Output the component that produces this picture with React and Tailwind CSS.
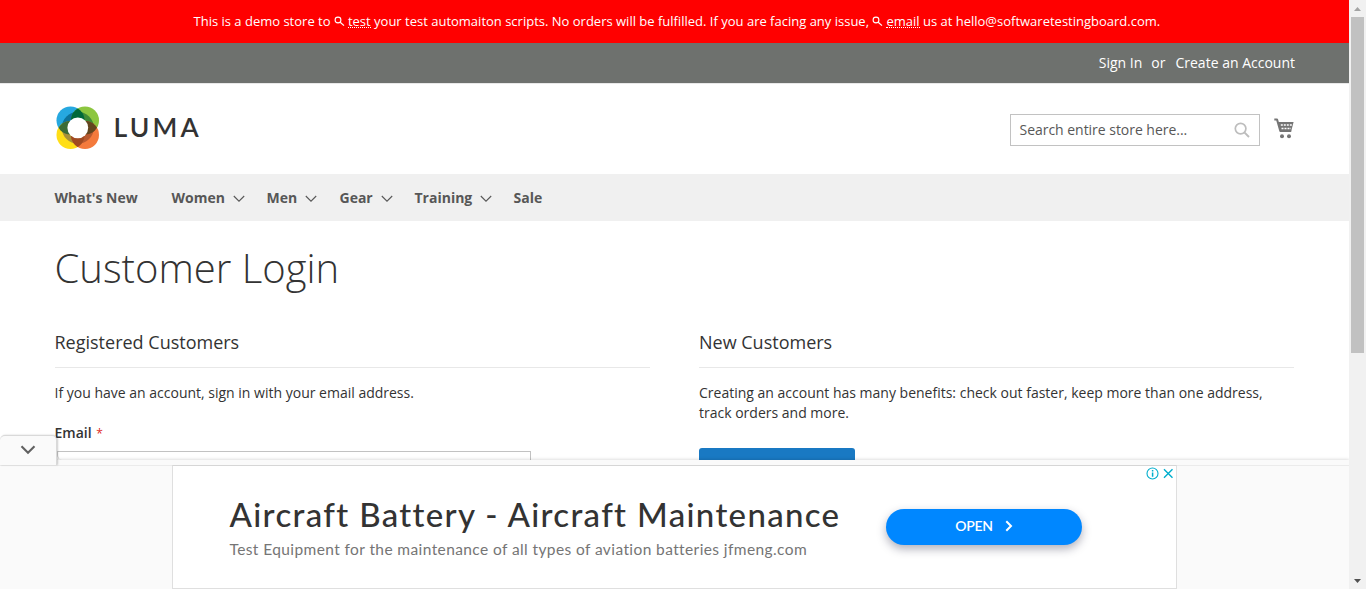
import React from "react";

const menu = [
  { label: "What's New", wrap: "w-[117px]", arrow: false },
  { label: "Women", wrap: "w-[95px]", arrow: true },
  { label: "Men", wrap: "w-[73px]", arrow: true },
  { label: "Gear", wrap: "w-[75px]", arrow: true },
  { label: "Training", wrap: "w-[99px]", arrow: true },
  { label: "Sale", wrap: "", arrow: false },
];

function TinySearch() {
  return (
    <svg className="mr-[3px] inline-block h-[11px] w-[11px] align-[-1px]" viewBox="0 0 11 11" fill="none" stroke="#fff">
      <circle cx="4" cy="4" r="2.9" strokeWidth="1.1" />
      <path d="M6.2 6.2 L10 9.6" strokeWidth="1.2" />
    </svg>
  );
}

function Chevron() {
  return (
    <svg className="mt-[2px] h-[8px] w-[12px]" viewBox="0 0 12 8" fill="none" stroke="#575757" strokeWidth="1.1">
      <path d="M0.8 1 L6 6.2 L11.2 1" />
    </svg>
  );
}

function Logo() {
  return (
    <svg className="h-[44px] w-[44px]" viewBox="0 0 44 44">
      <defs>
        <clipPath id="tl"><circle cx="14.5" cy="14.5" r="14" /></clipPath>
        <clipPath id="tr"><circle cx="29" cy="14.5" r="14" /></clipPath>
        <clipPath id="bl"><circle cx="14.5" cy="29" r="14" /></clipPath>
        <clipPath id="br"><circle cx="29" cy="29" r="14" /></clipPath>
      </defs>
      <circle cx="14.5" cy="14.5" r="14" fill="#26a8e0" />
      <circle cx="29" cy="14.5" r="14" fill="#8cc63f" />
      <circle cx="14.5" cy="29" r="14" fill="#ffde17" />
      <circle cx="29" cy="29" r="14" fill="#f47a3c" />
      <circle cx="21.8" cy="21.8" r="16" fill="#0c7299" clipPath="url(#tl)" />
      <circle cx="21.8" cy="21.8" r="16" fill="#3f8a36" clipPath="url(#tr)" />
      <circle cx="21.8" cy="21.8" r="16" fill="#a8903a" clipPath="url(#bl)" />
      <circle cx="21.8" cy="21.8" r="16" fill="#b85a30" clipPath="url(#br)" />
      <g clipPath="url(#tl)"><circle cx="29" cy="14.5" r="14" fill="#00693a" /></g>
      <g clipPath="url(#tl)"><circle cx="14.5" cy="29" r="14" fill="#3b6b35" /></g>
      <g clipPath="url(#tr)"><circle cx="29" cy="29" r="14" fill="#63461f" /></g>
      <g clipPath="url(#bl)"><circle cx="29" cy="29" r="14" fill="#a04a22" /></g>
      <circle cx="21.8" cy="21.8" r="10.4" fill="#fff" />
    </svg>
  );
}

function Cart() {
  return (
    <svg className="h-[21px] w-[20px]" viewBox="0 0 20 21" fill="none">
      <path d="M0.3 1.4 H3 L6.3 12.9 H17.2" stroke="#757575" strokeWidth="2" strokeLinejoin="round" />
      <path d="M4 4.1 H19.6 L17.1 13.6 H6.6 Z" fill="#757575" />
      <path d="M6.8 7.1 H18 M7.5 10.6 H17" stroke="#fff" strokeWidth="1.5" strokeDasharray="2 1" />
      <circle cx="8" cy="18.3" r="2" fill="#757575" />
      <circle cx="15" cy="18.3" r="2" fill="#757575" />
    </svg>
  );
}

function AdPanel() {
  return (
    <div className="absolute bottom-0 left-0 h-[154px] w-[1349px]">
      <div className="flex h-[25px] items-end">
        <div className="relative z-10 flex h-[30px] w-[57px] translate-y-[5px] items-center justify-center rounded-t-[5px] border-t border-r border-[#d9d9d9] bg-[#fafafa] pb-[2px] shadow-[1px_0_2px_rgba(0,0,0,0.2)]">
          <svg className="h-[10px] w-[16px]" viewBox="0 0 16 10" fill="none" stroke="#616161" strokeWidth="2.1">
            <path d="M1.5 1.2 L8 7.8 L14.5 1.2" />
          </svg>
        </div>
        <div className="h-[9px] w-[5px] rounded-bl-[5px] border-l border-[#d0d0d0]" />
      </div>
      <div className="h-[5px] bg-[#fafafa] shadow-[0_-1px_3px_rgba(0,0,0,0.12)]" />
      <div className="flex h-[124px] justify-center border-t border-[#ebebeb] bg-[#fafafa]">
        <div className="relative -mt-px flex h-[124px] w-[1005px] border border-[#dfdfdf] border-t-[#d6d6d6] bg-white font-[Lato,sans-serif]">
          <div className="ml-[56.5px] w-[656.5px] pt-[27px]">
            <div className="h-[42px] text-[33px] leading-[42px] font-medium tracking-[1.33px] whitespace-nowrap text-[#333]">
              Aircraft Battery - Aircraft Maintenance
            </div>
            <div className="mt-[3px] text-[15.5px] leading-[22px] tracking-[0.4px] whitespace-nowrap text-[#757575]">
              Test Equipment for the maintenance of all types of aviation batteries jfmeng.com
            </div>
          </div>
          <div className="mt-[43px] flex h-[36px] w-[196px] items-center justify-center gap-[12px] rounded-full bg-[#0087ff] pb-[2px] font-[Lato,sans-serif] text-[14px] font-semibold tracking-[-0.25px] text-white shadow-[0_4px_10px_rgba(30,30,60,0.35)]">
            <span>OPEN</span>
            <svg className="h-[12px] w-[8px]" viewBox="0 0 8 12" fill="none" stroke="#fff" strokeWidth="2">
              <path d="M1.3 1.3 L6 6 L1.3 10.7" />
            </svg>
          </div>
          <svg className="absolute top-[1px] right-[2px] h-[13px] w-[28px]" viewBox="0 0 28 13" fill="none" stroke="#00aecd">
            <circle cx="6.5" cy="6.5" r="5.5" strokeWidth="1.1" />
            <path d="M6.6 5.5 V9.8 M6.6 3 V4.5" strokeWidth="1.5" />
            <path d="M18 2.2 L26.5 10.8 M26.5 2.2 L18 10.8" strokeWidth="1.4" />
          </svg>
        </div>
      </div>
    </div>
  );
}

export default function App() {
  return (
    <div className="flex h-[589px] w-[1366px] overflow-hidden bg-white font-['Open_Sans',sans-serif] text-[14px] leading-5 text-[#333]">
      <div className="relative h-[589px] w-[1349px] overflow-hidden">
        <div className="flex h-[43px] bg-[#f00] pl-[193.5px] text-[13px] leading-[43px] whitespace-nowrap text-white">
          <p>
            This is a demo store to <TinySearch />
            <span className="inline-block h-[16px] border-b border-dotted border-white leading-[18px]">test</span> your
            test automaiton scripts. No orders will be fulfilled. If you are facing any issue, <TinySearch />
            <span className="inline-block h-[16px] border-b border-dotted border-white leading-[18px]">email</span> us
            at hello@softwaretestingboard.com.
          </p>
        </div>
        <div className="flex h-[40px] justify-end bg-[#6e716e] pr-[54px] leading-[40px] text-white">
          <span>Sign In</span>
          <span className="mr-[10px] ml-[9px]">or</span>
          <span>Create an Account</span>
        </div>
        <header className="flex h-[91px] border-t border-[#e8e8e8] pl-[55.5px]">
          <div className="mt-[22px] flex w-[954.5px]">
            <Logo />
            <span className="ml-[14px] font-[Lato,sans-serif] text-[26.5px] leading-[43px] font-semibold tracking-[3.2px] text-[#333]">
              LUMA
            </span>
          </div>
          <div className="mt-[30px] flex h-[32px] w-[250px] items-center justify-between border border-[#c2c2c2] pr-[9px] pl-[8.5px] text-[#575757]">
            <span className="tracking-[-0.03px]">Search entire store here...</span>
            <svg className="h-[16px] w-[16px]" viewBox="0 0 16 16" fill="none" stroke="#bdbdbd">
              <circle cx="6.6" cy="6.6" r="5.3" strokeWidth="1.7" />
              <path d="M10.6 10.6 L15 15" strokeWidth="2" />
            </svg>
          </div>
          <div className="mt-[34px] ml-[13.5px]">
            <Cart />
          </div>
        </header>
        <nav className="flex h-[47px] items-center bg-[#f0f0f0] pt-px pl-[54.5px] font-bold text-[#575757]">
          {menu.map((m) => (
            <div key={m.label} className={"flex items-center gap-[8px] whitespace-nowrap " + m.wrap}>
              <span>{m.label}</span>
              {m.arrow && <Chevron />}
            </div>
          ))}
        </nav>
        <main className="px-[54.5px]">
          <h1 className="h-[96px] pt-[25px] text-[40px] leading-[44px] font-light">Customer Login</h1>
          <div className="flex gap-[49.5px] pt-[12px]">
            <section className="w-[595px]">
              <h2 className="h-[39px] border-b border-[#e8e8e8] text-[18px] leading-[26px] font-normal">
                Registered Customers
              </h2>
              <p className="mt-[15px]">If you have an account, sign in with your email address.</p>
              <div className="mt-[20px] font-semibold">
                Email <span className="ml-[1px] text-[12px] font-normal text-[#e02b27]">*</span>
              </div>
              <div className="mt-[7px] h-[32px] w-[476px] border border-[#c2c2c2]" />
            </section>
            <section className="w-[595px]">
              <h2 className="h-[39px] border-b border-[#e8e8e8] text-[18px] leading-[26px] font-normal">
                New Customers
              </h2>
              <p className="mt-[15px]">
                Creating an account has many benefits: check out faster, keep more than one address,
                <br />
                track orders and more.
              </p>
              <div className="mt-[25px] h-[34px] w-[156px] rounded-[3px] bg-[#1979c3]" />
            </section>
          </div>
        </main>
        <AdPanel />
      </div>
      <div className="flex h-[589px] w-[17px] flex-col items-center bg-[#f1f1f1]">
        <div className="flex h-[17px] items-center">
          <svg className="h-[4px] w-[7px]" viewBox="0 0 7 4" fill="#a3a3a3">
            <path d="M0 4 L3.5 0 L7 4 Z" />
          </svg>
        </div>
        <div className="h-[336px] w-[13px] bg-[#c1c1c1]" />
        <div className="mt-auto flex h-[17px] items-center">
          <svg className="h-[4px] w-[7px]" viewBox="0 0 7 4" fill="#505050">
            <path d="M0 0 L3.5 4 L7 0 Z" />
          </svg>
        </div>
      </div>
    </div>
  );
}
